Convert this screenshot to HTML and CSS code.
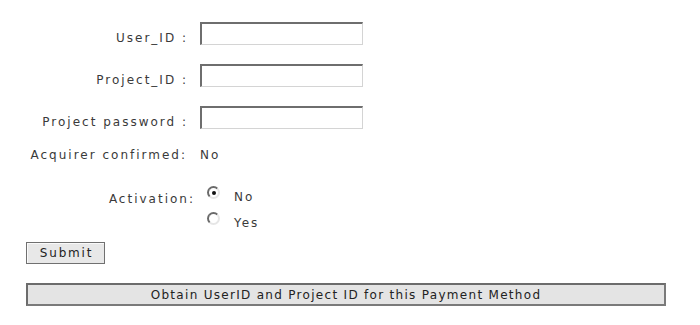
FILE: index.html
```html
<!DOCTYPE html>
<html>
<head>
<meta charset="utf-8">
<link rel="stylesheet" href="styles.css">
</head>
<body>
<form class="form">
  <div class="row field">
    <label class="label">User_ID :</label>
    <input class="text" type="text">
  </div>
  <div class="row field">
    <label class="label">Project_ID :</label>
    <input class="text" type="text">
  </div>
  <div class="row field">
    <label class="label">Project password :</label>
    <input class="text" type="password">
  </div>
  <div class="row info">
    <span class="label label-b">Acquirer confirmed:</span>
    <span class="value">No</span>
  </div>
  <div class="row activation">
    <span class="label label-c">Activation:</span>
    <div class="radios">
      <label class="opt"><input class="radio" type="radio" name="act" checked><span>No</span></label>
      <label class="opt"><input class="radio" type="radio" name="act"><span>Yes</span></label>
    </div>
  </div>
  <button class="submit" type="button">Submit</button>
  <button class="obtain" type="button">Obtain UserID and Project ID for this Payment Method</button>
</form>
</body>
</html>
```
FILE: styles.css
```css
body {
  margin: 0;
  background: #fff;
  font-family: "DejaVu Sans", Verdana, sans-serif;
  font-size: 12px;
  letter-spacing: 2px;
  color: #3a3a3a;
}
.form {
  padding: 22px 0 0 26px;
  display: flex;
  flex-direction: column;
  align-items: flex-start;
}
.row {
  display: flex;
  align-items: flex-start;
}
.field {
  height: 23px;
  margin-bottom: 19px;
}
.label {
  width: 162px;
  text-align: right;
  padding-top: 9px;
  line-height: 14px;
  white-space: nowrap;
}
.text {
  margin: 0 0 0 12px;
  width: 163px;
  height: 23px;
  box-sizing: border-box;
  background: #fff;
  border-style: solid;
  border-width: 2px 1px 1px 2px;
  border-color: #6e6e6e #d4d4d4 #d4d4d4 #6e6e6e;
  padding: 0 3px;
  font: inherit;
  outline: none;
}
.info {
  margin-top: 0;
  line-height: 14px;
}
.label-b {
  padding-top: 0;
  width: 161px;
}
.value {
  margin-left: 13px;
}
.activation {
  margin-top: 24px;
}
.label-c {
  padding-top: 6px;
  width: 169px;
}
.radios {
  display: flex;
  flex-direction: column;
  margin-left: 12px;
  gap: 8px;
}
.opt {
  display: flex;
  align-items: flex-start;
}
.opt span {
  padding-top: 4px;
  margin-left: 14px;
  line-height: 14px;
}
.radio {
  appearance: none;
  -webkit-appearance: none;
  margin: 0;
  width: 13px;
  height: 13px;
  border-radius: 50%;
  box-sizing: border-box;
  border: 2px solid;
  border-color: #6a6a6a #e6e6e6 #e6e6e6 #6a6a6a;
  background: #fff;
  position: relative;
}
.radio:checked::after {
  content: "";
  position: absolute;
  left: 2.5px;
  top: 2.5px;
  width: 4px;
  height: 4px;
  border-radius: 50%;
  background: #111;
}
.submit {
  margin-top: 12px;
  width: 79px;
  height: 22px;
  background: #e8e8e8;
  border: 1px solid #707070;
  box-shadow: inset 1px 1px 0 #fafafa;
  font: inherit;
  letter-spacing: 1.8px;
  color: #222;
  padding: 0 0 0 2px;
}
.obtain {
  margin-top: 19px;
  width: 640px;
  height: 23px;
  background: #e4e4e4;
  border: 2px solid #7a7a7a;
  border-color: #6c6c6c #7a7a7a #7a7a7a #6c6c6c;
  font: inherit;
  letter-spacing: 1.3px;
  color: #222;
  padding: 0;
}
```
